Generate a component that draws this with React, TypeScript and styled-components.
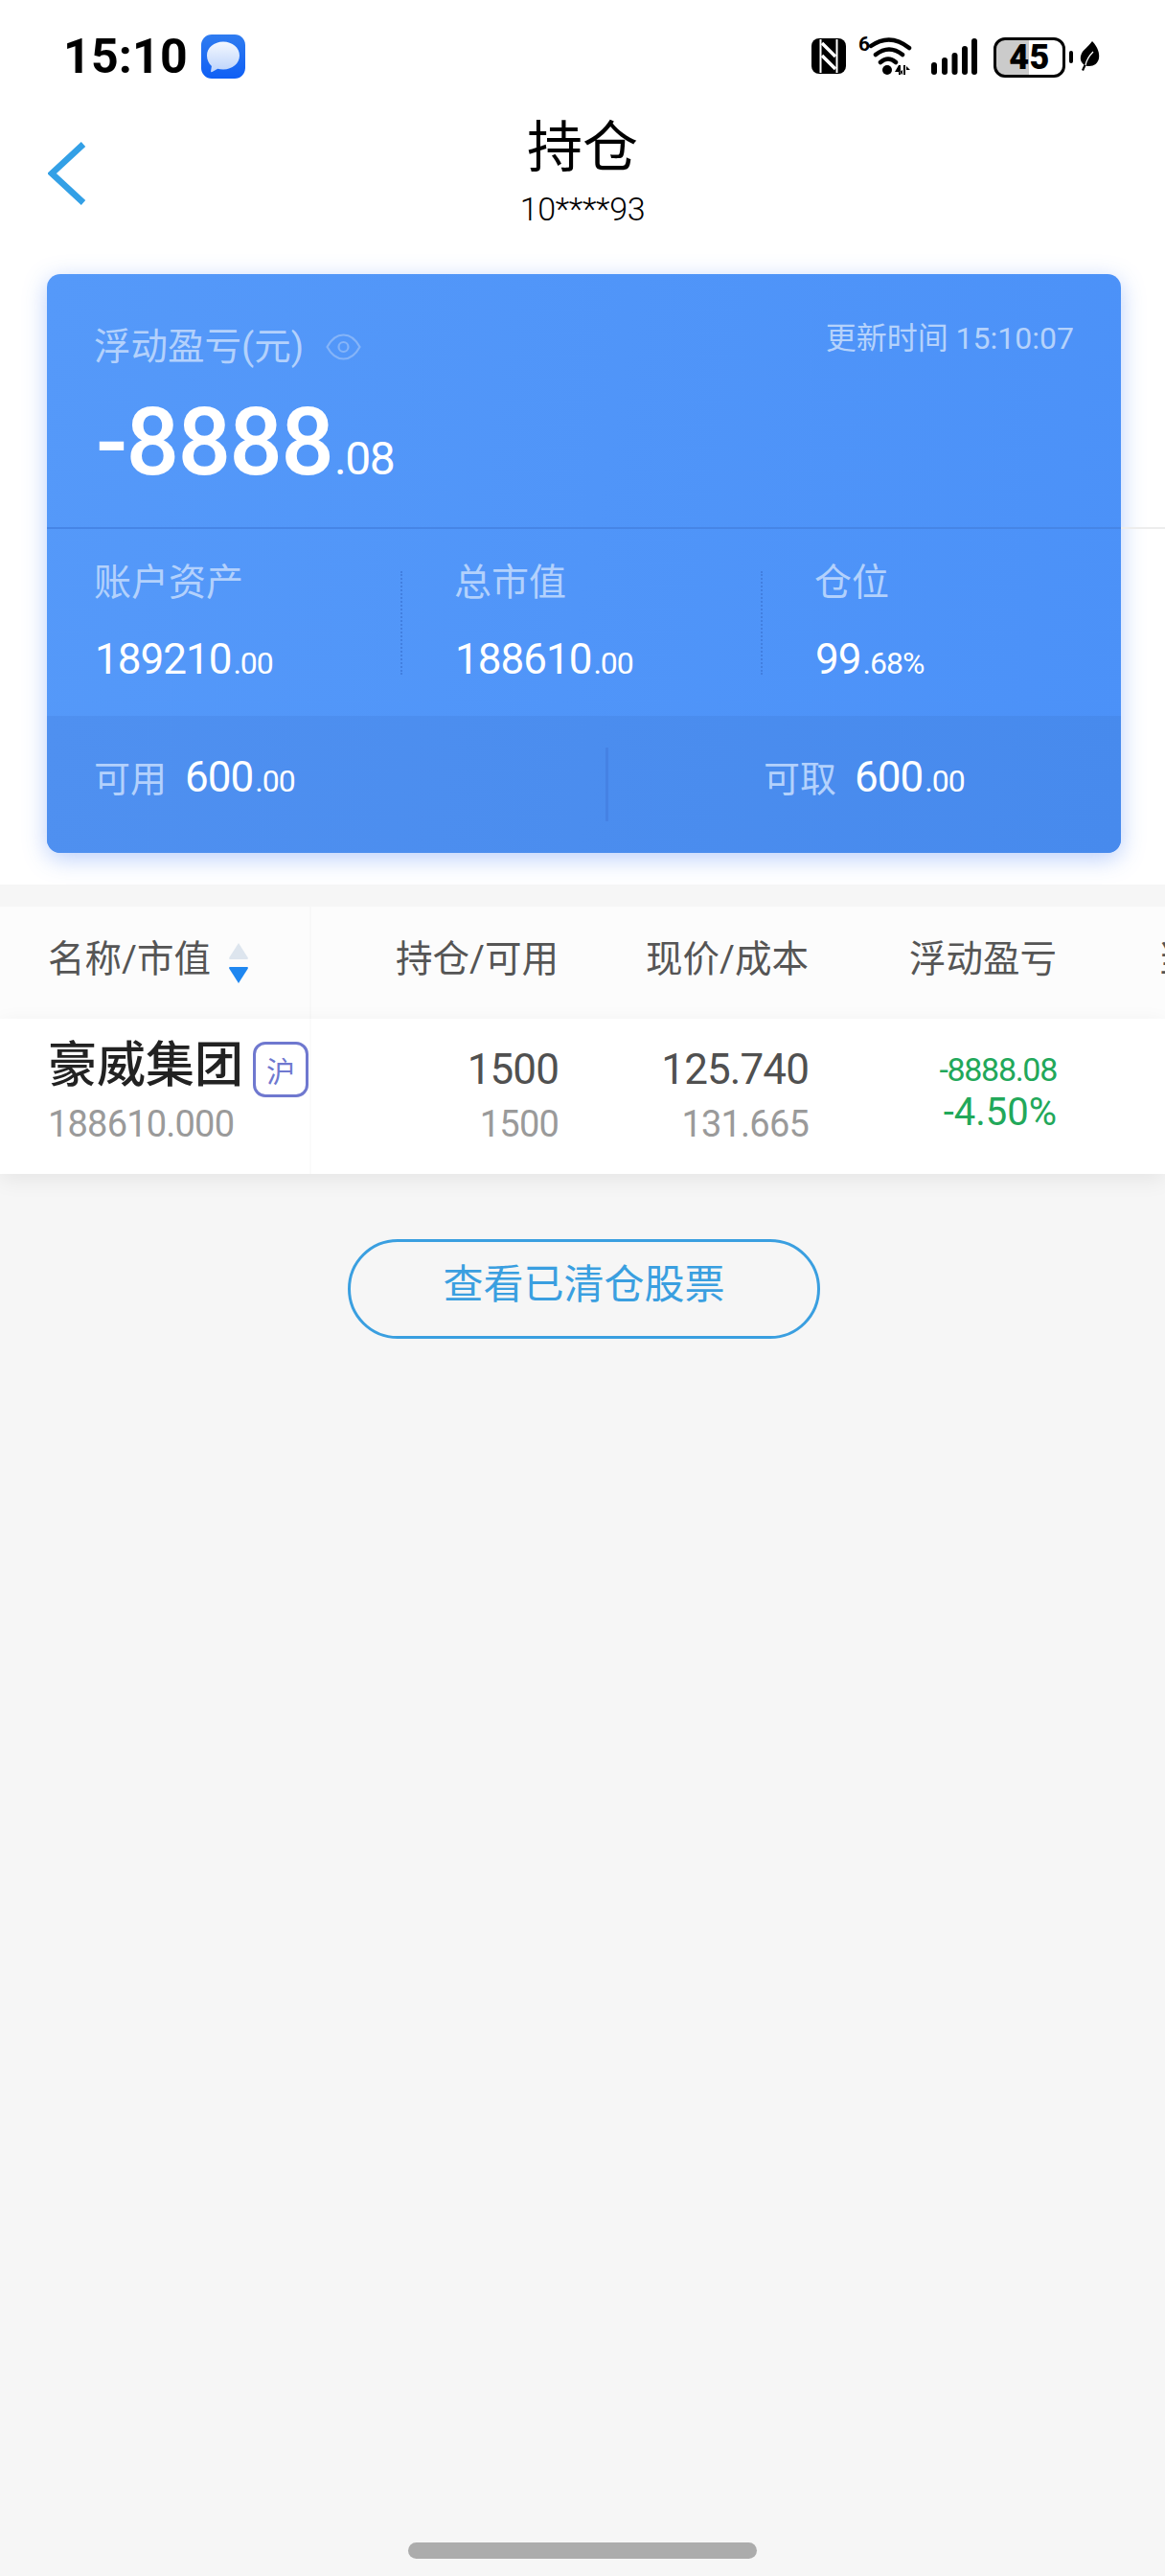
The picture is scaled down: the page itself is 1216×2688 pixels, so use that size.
import React from "react";
import styled, { createGlobalStyle } from "styled-components";

const Global = createGlobalStyle`
  html, body { margin: 0; padding: 0; background: #f6f6f6; overflow: hidden; }
  * { box-sizing: border-box; }
  #root { width: 1216px; height: 2688px; }
`;

const Page = styled.div`
  position: relative;
  width: 1216px;
  height: 2688px;
  overflow: hidden;
  display: flex;
  flex-direction: column;
  background: #f6f6f6;
  font-family: Roboto, "Noto Sans CJK SC", sans-serif;
`;

const TopSection = styled.section`
  height: 923px;
  background: #fff;
  flex: none;
`;

const StatusBar = styled.div`
  height: 118px;
  padding: 34px 68px 0 66px;
  display: flex;
  justify-content: space-between;
  align-items: flex-start;
`;
const StatusLeft = styled.div`
  display: flex;
  align-items: flex-start;
  gap: 14px;
`;
const Time = styled.div`
  font-size: 50px;
  line-height: 50px;
  font-weight: 700;
  color: #000;
  letter-spacing: 0.2px;
`;
const AppIcon = styled.svg`
  width: 46px;
  height: 46px;
  margin-top: 2px;
`;
const StatusRight = styled.div`
  display: flex;
  align-items: flex-start;
`;
const NfcIcon = styled.svg`
  width: 36px;
  height: 37px;
  margin-top: 6px;
`;
const WifiIcon = styled.svg`
  width: 56px;
  height: 44px;
  margin: 3px 0 0 13px;
`;
const SignalIcon = styled.svg`
  width: 48px;
  height: 38px;
  margin: 6px 0 0 20px;
`;
const Battery = styled.div`
  width: 75px;
  height: 42px;
  margin: 5px 0 0 17px;
  border: 3px solid #000;
  border-radius: 12px;
  background: linear-gradient(90deg, #cbcbcb 50%, #fff 50%);
  display: flex;
  align-items: center;
  justify-content: center;
  font-size: 36px;
  line-height: 36px;
  font-weight: 900;
  color: #000;
  letter-spacing: 0.5px;
`;
const BatteryNub = styled.div`
  width: 4px;
  height: 13px;
  margin: 19px 0 0 4px;
  border-radius: 2px;
  background: #000;
`;
const LeafIcon = styled.svg`
  width: 21px;
  height: 31px;
  margin: 9px 0 0 7px;
`;

const Nav = styled.div`
  height: 168px;
  display: grid;
  grid-template-columns: 1fr auto 1fr;
  padding-left: 50px;
`;
const BackIcon = styled.svg`
  width: 40px;
  height: 66px;
  margin-top: 30px;
`;
const NavCenter = styled.div`
  display: flex;
  flex-direction: column;
  align-items: center;
  margin-left: -50px;
`;
const Title = styled.div`
  margin-top: 7px;
  font-size: 58px;
  line-height: 58px;
  color: #000;
`;
const Account = styled.div`
  margin-top: 18px;
  font-size: 34px;
  line-height: 34px;
  font-weight: 300;
  color: #000;
  letter-spacing: -0.3px;
`;

const Card = styled.div`
  width: 1121px;
  height: 604px;
  margin-left: 49px;
  border-radius: 14px;
  background: linear-gradient(100deg, #5599f9 0%, #4b91f8 100%);
  box-shadow: 0 6px 24px rgba(74, 130, 245, 0.38);
`;
const CardTop = styled.div`
  position: relative;
  height: 266px;
  padding: 52px 49px 0 50px;
  border-bottom: 2px solid #4685e6;
  &::after {
    content: "";
    position: absolute;
    left: 100%;
    bottom: -2px;
    width: 46px;
    height: 2px;
    background: #ededed;
  }
`;
const CardTopRow = styled.div`
  display: flex;
  justify-content: space-between;
  align-items: flex-start;
`;
const LabelGroup = styled.div`
  display: flex;
  align-items: center;
  gap: 23px;
`;
const PnlLabel = styled.div`
  font-size: 38.5px;
  line-height: 48px;
  margin-left: -1px;
  color: #b3d1fc;
`;
const EyeIcon = styled.svg`
  width: 37px;
  height: 30px;
`;
const UpdateTime = styled.div`
  font-size: 32px;
  line-height: 30px;
  color: #b5d2fb;
`;
const Amount = styled.div`
  margin-top: 27px;
  display: flex;
  align-items: baseline;
  padding-left: 1px;
  color: #fff;
  font-size: 98px;
  line-height: 98px;
  font-weight: 500;
  letter-spacing: -1.8px;
`;
const AmountCents = styled.span`
  font-size: 48px;
  font-weight: 400;
  letter-spacing: -1.5px;
  margin-left: 2px;
`;

const Stats = styled.div`
  height: 195px;
  padding-left: 49px;
  display: flex;
  align-items: flex-start;
`;
const Stat = styled.div`
  width: 320px;
  padding-top: 37px;
`;
const StatLabel = styled.div`
  font-size: 39px;
  line-height: 39px;
  color: #b3d1fc;
`;
const StatValue = styled.div`
  margin-top: 38px;
  padding-left: 1px;
  font-size: 44px;
  line-height: 44px;
  color: #fff;
  letter-spacing: -1px;
`;
const Small = styled.span`
  font-size: 32px;
  letter-spacing: -1px;
  margin-left: 2px;
`;
const DottedRule = styled.div`
  width: 0;
  height: 108px;
  margin: 44px 54px 0 0;
  border-left: 2px dotted #427fe0;
`;

const CardBottom = styled.div`
  height: 143px;
  border-radius: 0 0 14px 14px;
  background: linear-gradient(100deg, #4f90f0 0%, #478aed 100%);
  display: flex;
`;
const Avail = styled.div<{ $pad: number; $w?: number }>`
  width: ${(p) => (p.$w ? `${p.$w}px` : "auto")};
  padding: 42px 0 0 ${(p) => p.$pad}px;
  display: flex;
  align-items: baseline;
  gap: 19px;
`;
const AvailLabel = styled.span`
  font-size: 38px;
  line-height: 44px;
  color: #b3d1fc;
`;
const AvailValue = styled.span`
  font-size: 44px;
  line-height: 44px;
  color: #fff;
  letter-spacing: -1px;
`;
const AvailRule = styled.div`
  width: 3px;
  height: 77px;
  margin-top: 33px;
  background: #4582e4;
`;

const Spacer = styled.div`
  height: 23px;
  flex: none;
  background: #f6f6f6;
`;
const gridCols = "325px 258px 261px 259px 1fr";
const TableHeader = styled.div`
  height: 117px;
  flex: none;
  display: grid;
  grid-template-columns: ${gridCols};
  background: #fcfcfc;
`;
const TableRow = styled.div`
  position: relative;
  height: 162px;
  flex: none;
  display: grid;
  grid-template-columns: ${gridCols};
  background: #fff;
  box-shadow: 0 6px 22px rgba(0, 0, 0, 0.07);
`;
const NameHead = styled.div`
  padding: 35px 0 0 50px;
  display: flex;
  align-items: flex-start;
  gap: 18px;
  border-right: 2px solid #f8f8f8;
`;
const HeadText = styled.div`
  font-size: 38.5px;
  line-height: 39px;
  color: #555;
  white-space: nowrap;
`;
const HeadCell = styled(HeadText)`
  padding-top: 35px;
  text-align: right;
`;
const ClippedHead = styled(HeadText)`
  padding: 35px 0 0 105px;
`;
const SortIcon = styled.svg`
  width: 22px;
  height: 44px;
  margin-top: 2px;
`;
const NameCell = styled.div`
  padding: 24px 0 0 50px;
  border-right: 2px solid #fbfbfb;
`;
const NameLine = styled.div`
  height: 58px;
  display: flex;
  align-items: flex-start;
`;
const StockName = styled.div`
  font-size: 51px;
  line-height: 50px;
  font-weight: 500;
  color: #222;
  white-space: nowrap;
`;
const Badge = styled.div`
  width: 58px;
  height: 58px;
  margin-left: 10px;
  border: 3px solid #6f78cf;
  border-radius: 13px;
  display: flex;
  align-items: center;
  justify-content: center;
  font-size: 30px;
  color: #6f78cf;
`;
const SubValue = styled.div`
  font-size: 38px;
  line-height: 44px;
  color: #9a9a9a;
  letter-spacing: -0.8px;
`;
const NameSub = styled(SubValue)`
  margin-top: 6px;
`;
const NumCell = styled.div`
  padding-top: 30px;
  text-align: right;
`;
const MainValue = styled.div`
  font-size: 44px;
  line-height: 46px;
  color: #505050;
  letter-spacing: -0.9px;
`;
const NumSub = styled(SubValue)`
  margin-top: 12px;
`;
const PnlCell = styled.div`
  padding-top: 34px;
  text-align: right;
  color: #22a85a;
`;
const PnlValue = styled.div`
  font-size: 34px;
  line-height: 38px;
  letter-spacing: -1.3px;
`;
const PnlPct = styled.div`
  margin-top: 4px;
  font-size: 40px;
  line-height: 44px;
`;

const ClearedButton = styled.button`
  align-self: flex-start;
  width: 493px;
  height: 104px;
  margin: 68px 0 0 363px;
  padding: 0 0 8px;
  border: 3px solid #3a9fe0;
  border-radius: 52px;
  background: transparent;
  color: #3a9fe0;
  font-family: inherit;
  font-size: 42px;
  line-height: 50px;
`;
const HomeIndicator = styled.div`
  align-self: center;
  width: 364px;
  height: 17px;
  margin-top: auto;
  margin-bottom: 18px;
  border-radius: 9px;
  background: #acacac;
`;

export default function App() {
  return (
    <Page>
      <Global />
      <TopSection>
        <StatusBar>
          <StatusLeft>
            <Time>15:10</Time>
            <AppIcon viewBox="0 0 46 46">
              <defs>
                <linearGradient id="appBg" x1="0" y1="0" x2="0" y2="1">
                  <stop offset="0" stopColor="#2f7cf0" />
                  <stop offset="1" stopColor="#0f5ff5" />
                </linearGradient>
                <linearGradient id="bubble" x1="0" y1="0" x2="0" y2="1">
                  <stop offset="0" stopColor="#f4f8ff" />
                  <stop offset="1" stopColor="#bcd3fb" />
                </linearGradient>
              </defs>
              <rect width="46" height="46" rx="11" fill="url(#appBg)" />
              <path d="M23 7.500c9.600 0 17 6.400 17 14.500s-7.400 14.500-17 14.500c-2.100 0-4-.3-5.800-.8L11.500 39c-.8.400-1.600-.2-1.400-1.100l.8-5C7.800 30.200 6 26.300 6 22 6 13.900 13.400 7.500 23 7.500z" fill="url(#bubble)" />
            </AppIcon>
          </StatusLeft>
          <StatusRight>
            <NfcIcon viewBox="0 0 36 37">
              <rect width="36" height="37" rx="8" fill="#000" />
              <path d="M9.500 1v35M26.500 1v35" stroke="#fff" strokeWidth="2" />
              <path d="M11 5l14 14M11 18l14 14" stroke="#fff" strokeWidth="3.500" fill="none" />
            </NfcIcon>
            <WifiIcon viewBox="0 0 56 44">
              <text x="0" y="16" fontFamily="Roboto, sans-serif" fontWeight="700" fontSize="21" fill="#000">6</text>
              <path d="M13 11Q33-3 53 13M18 20Q32 9 46 20M23 28Q31 21 39 28" stroke="#000" strokeWidth="4.500" fill="none" strokeLinecap="round" />
              <circle cx="30" cy="36" r="5" fill="#000" />
              <path d="M42 31l-4 7h4v3h2V31zM47 31h2v10h-2zM50 32l4 4h-4zM46 36v5l-3-3z" fill="#000" />
            </WifiIcon>
            <SignalIcon viewBox="0 0 48 38">
              <rect x="0" y="25" width="6" height="13" rx="3" fill="#000" />
              <rect x="11" y="20" width="6" height="18" rx="3" fill="#000" />
              <rect x="21.500" y="15" width="6" height="23" rx="3" fill="#000" />
              <rect x="32" y="8" width="6" height="30" rx="3" fill="#000" />
              <rect x="42" y="0" width="6" height="38" rx="3" fill="#000" />
            </SignalIcon>
            <Battery>45</Battery>
            <BatteryNub />
            <LeafIcon viewBox="0 0 21 31">
              <path d="M13 0c6 6 8 13 7 18-1 5-5 8-10 8-1.500 0-2.500 0-3.500-.5L4 31l-2-1 2.500-5.500C1 22 0 18 1.500 14 3 9 9 6 13 0z" fill="#000" />
              <path d="M14 11C10 15 7 20 6 25" stroke="#fff" strokeWidth="1.300" fill="none" />
            </LeafIcon>
          </StatusRight>
        </StatusBar>
        <Nav>
          <BackIcon viewBox="0 0 40 66">
            <path d="M37 2.500L4 33l33 30.500" fill="none" stroke="#33a0e6" strokeWidth="6.500" />
          </BackIcon>
          <NavCenter>
            <Title>持仓</Title>
            <Account>10****93</Account>
          </NavCenter>
        </Nav>
        <Card>
          <CardTop>
            <CardTopRow>
              <LabelGroup>
                <PnlLabel>浮动盈亏(元)</PnlLabel>
                <EyeIcon viewBox="0 0 37 30" fill="none" stroke="#85b4f8" strokeWidth="2.200">
                  <path d="M1.500 15C6 6.500 12 2.500 18.500 2.500S31 6.500 35.500 15C31 23.500 25 27.500 18.500 27.500S6 23.500 1.500 15z" />
                  <circle cx="18.500" cy="15" r="5" />
                </EyeIcon>
              </LabelGroup>
              <UpdateTime>更新时间 15:10:07</UpdateTime>
            </CardTopRow>
            <Amount>
              -8888<AmountCents>.08</AmountCents>
            </Amount>
          </CardTop>
          <Stats>
            <Stat>
              <StatLabel>账户资产</StatLabel>
              <StatValue>189210<Small>.00</Small></StatValue>
            </Stat>
            <DottedRule />
            <Stat>
              <StatLabel>总市值</StatLabel>
              <StatValue>188610<Small>.00</Small></StatValue>
            </Stat>
            <DottedRule />
            <Stat>
              <StatLabel>仓位</StatLabel>
              <StatValue>99<Small>.68%</Small></StatValue>
            </Stat>
          </Stats>
          <CardBottom>
            <Avail $pad={49} $w={583}>
              <AvailLabel>可用</AvailLabel>
              <AvailValue>600<Small>.00</Small></AvailValue>
            </Avail>
            <AvailRule />
            <Avail $pad={162}>
              <AvailLabel>可取</AvailLabel>
              <AvailValue>600<Small>.00</Small></AvailValue>
            </Avail>
          </CardBottom>
        </Card>
      </TopSection>
      <Spacer />
      <TableHeader>
        <NameHead>
          <HeadText>名称/市值</HeadText>
          <SortIcon viewBox="0 0 21 43">
            <path d="M10.500 1L20 16c.4.700 0 1.500-1 1.500H2c-1 0-1.400-.8-1-1.500z" fill="#dde5ee" />
            <path d="M10.500 42L20 27c.4-.7 0-1.500-1-1.500H2c-1 0-1.400.8-1 1.500z" fill="#1f87f0" />
          </SortIcon>
        </NameHead>
        <HeadCell>持仓/可用</HeadCell>
        <HeadCell>现价/成本</HeadCell>
        <HeadCell>浮动盈亏</HeadCell>
        <ClippedHead>当日盈亏</ClippedHead>
      </TableHeader>
      <TableRow>
        <NameCell>
          <NameLine>
            <StockName>豪威集团</StockName>
            <Badge>沪</Badge>
          </NameLine>
          <NameSub>188610.000</NameSub>
        </NameCell>
        <NumCell>
          <MainValue>1500</MainValue>
          <NumSub>1500</NumSub>
        </NumCell>
        <NumCell>
          <MainValue>125.740</MainValue>
          <NumSub>131.665</NumSub>
        </NumCell>
        <PnlCell>
          <PnlValue>-8888.08</PnlValue>
          <PnlPct>-4.50%</PnlPct>
        </PnlCell>
      </TableRow>
      <ClearedButton>查看已清仓股票</ClearedButton>
      <HomeIndicator />
    </Page>
  );
}
